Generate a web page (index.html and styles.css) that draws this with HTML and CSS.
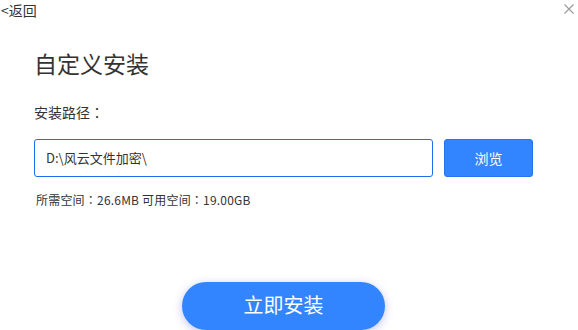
FILE: index.html
```html
<!DOCTYPE html>
<html lang="zh-CN">
<head>
<meta charset="utf-8">
<title>自定义安装</title>
<link rel="stylesheet" href="styles.css">
</head>
<body>
<div class="window">
  <div class="topbar">
    <span class="back">&lt;返回</span>
    <svg class="close" width="10" height="10" viewBox="0 0 10 10"><path d="M0.5 0.5L9.5 9.5M9.5 0.5L0.5 9.5" stroke="#9a9a9a" stroke-width="1.1" fill="none"/></svg>
  </div>
  <div class="main">
    <h1 class="title">自定义安装</h1>
    <div class="label">安装路径<span class="colon" lang="zh-TW">：</span></div>
    <div class="row">
      <div class="path">D:\风云文件加密\</div>
      <div class="browse">浏览</div>
    </div>
    <div class="info">所需空间<span class="colon" lang="zh-TW">：</span>26.6MB 可用空间<span class="colon" lang="zh-TW">：</span>19.00GB</div>
  </div>
  <div class="footer">
    <div class="install">立即安装</div>
  </div>
</div>
</body>
</html>
```
FILE: styles.css
```css
html, body {
  margin: 0;
  padding: 0;
  background: #ffffff;
}
body {
  font-family: "Noto Sans CJK SC", "Noto Sans", sans-serif;
  color: #333333;
  overflow: hidden;
}
.window {
  width: 578px;
  height: 330px;
  display: flex;
  flex-direction: column;
}
.topbar {
  height: 22px;
  display: flex;
  justify-content: space-between;
  align-items: flex-start;
  padding: 0 4px 0 1px;
}
.back {
  font-size: 14px;
  line-height: 20px;
  color: #333;
}
.close {
  margin-top: 4px;
}
.main {
  padding: 0 34px;
  display: flex;
  flex-direction: column;
}
.colon {
  font-family: "Noto Sans CJK TC", sans-serif;
}
.title {
  margin: 27px 0 0 0;
  font-size: 23px;
  line-height: 32px;
  font-weight: normal;
  color: #333;
}
.label {
  margin-top: 23px;
  font-size: 14px;
  line-height: 20px;
}
.row {
  margin-top: 17px;
  display: flex;
  gap: 11px;
  height: 38px;
}
.path {
  width: 399px;
  box-sizing: border-box;
  border: 1px solid #1c6fe9;
  border-radius: 3px;
  padding-left: 11px;
  font-size: 13px;
  line-height: 36px;
  color: #333;
}
.browse {
  width: 89px;
  box-sizing: border-box;
  background: #3385ff;
  border: 1px solid #2474ee;
  border-radius: 3px;
  color: #fff;
  font-size: 14px;
  line-height: 36px;
  text-align: center;
}
.info {
  margin-top: 15px;
  font-size: 12px;
  line-height: 16px;
  padding-left: 2px;
  letter-spacing: 0.2px;
  color: #333;
}
.footer {
  margin-top: 74px;
  display: flex;
  justify-content: center;
  padding-right: 11px;
}
.install {
  width: 203px;
  height: 48px;
  border-radius: 24px;
  background: #3385ff;
  box-shadow: 0 2px 8px rgba(70, 80, 200, 0.35);
  color: #fff;
  font-size: 20px;
  line-height: 46px;
  text-align: center;
}
```
